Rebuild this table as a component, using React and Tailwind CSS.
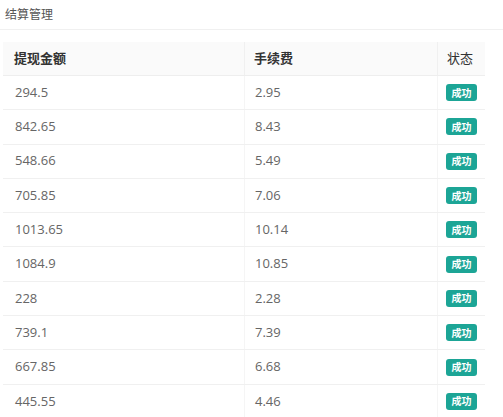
const rows = [
  ['294.5', '2.95'],
  ['842.65', '8.43'],
  ['548.66', '5.49'],
  ['705.85', '7.06'],
  ['1013.65', '10.14'],
  ['1084.9', '10.85'],
  ['228', '2.28'],
  ['739.1', '7.39'],
  ['667.85', '6.68'],
  ['445.55', '4.46'],
];

const font = { fontFamily: '"Open Sans", "Noto Sans CJK SC", sans-serif' };

export default function App() {
  return (
    <div className="w-[503px] h-[417px] overflow-hidden bg-white" style={font}>
      <div className="h-[30px] pl-[5px] flex items-center border-b border-[#f0f0f0] text-[12px] text-[#555]">
        结算管理
      </div>
      <div className="ml-[3px] w-[482px] mt-[12px]">
        <div className="grid grid-cols-[241px_193px_48px] h-[34px] bg-[#fafafa] border-b border-[#eeeeee] text-[13px] font-semibold text-[#333]">
          <div className="flex items-center pl-[11px]">提现金额</div>
          <div className="flex items-center pl-[9px] border-l border-[#f0f0f0]">手续费</div>
          <div className="flex items-center pl-[9px] border-l border-[#f0f0f0] font-normal">状态</div>
        </div>
        {rows.map(([amount, fee]) => (
          <div
            key={amount}
            className="grid grid-cols-[241px_193px_48px] h-[34.3px] border-b border-[#f0f0f0] text-[13px] text-[#666]"
          >
            <div className="flex items-center pl-[12px]">{amount}</div>
            <div className="flex items-center pl-[10px] border-l border-[#f5f5f5]">{fee}</div>
            <div className="flex items-center pl-[8px] border-l border-[#f5f5f5]">
              <span className="h-[17px] w-[31px] rounded-[3px] bg-[#1ca596] text-white text-[10px] font-bold flex items-center justify-center leading-none">
                成功
              </span>
            </div>
          </div>
        ))}
      </div>
    </div>
  );
}
